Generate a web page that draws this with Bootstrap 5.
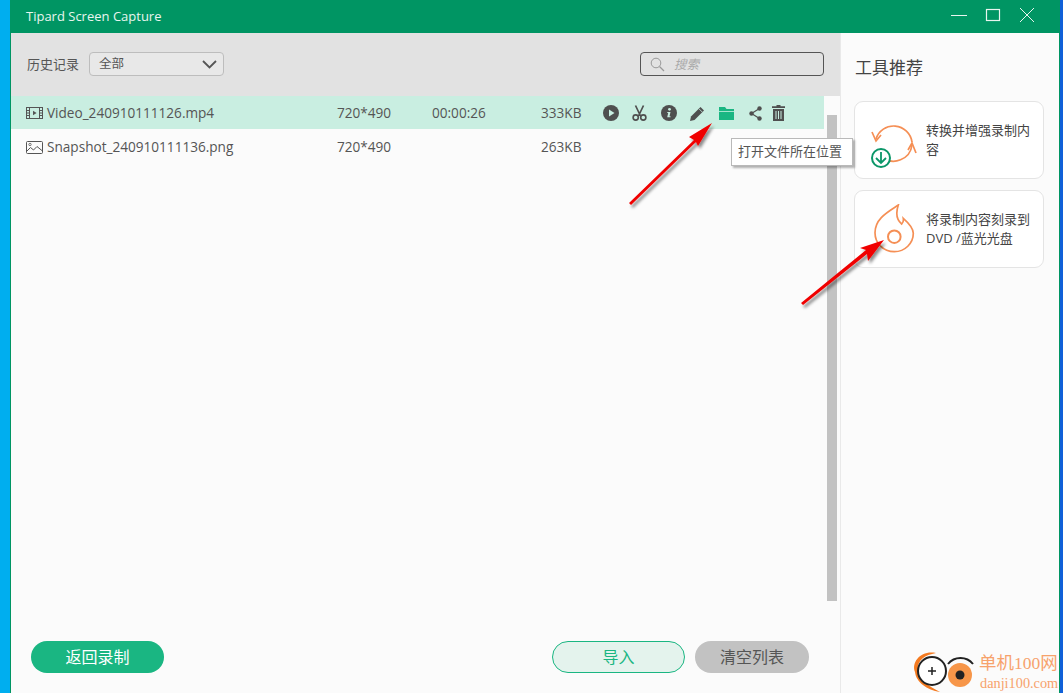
<!DOCTYPE html>
<html lang="zh-CN">

<head>
    <meta charset="UTF-8">
    <title>Tipard Screen Capture</title>
    <link href="https://cdn.jsdelivr.net/npm/bootstrap@5.3.3/dist/css/bootstrap.min.css" rel="stylesheet">
    <style>
        html, body {
            height: 100%;
            overflow: hidden;
        }

        body {
            background: linear-gradient(to right, #00aeef 1060px, #1060d8 1060px);
            font-family: "Open Sans", "Noto Sans CJK SC", sans-serif;
            font-size: 13.6px;
            color: #555;
        }

        .app-window {
            position: relative;
            width: 1050px;
            height: 693px;
            margin-left: 10px;
            background-color: #fbfbfb;
            border-left: 1px solid #009563;
            border-right: 1px solid #009563;
        }

        .title-bar {
            height: 33px;
            background-color: #009563;
            color: #e8f5ef;
            padding-left: 15px;
            font-size: 13px;
        }

        .win-btns {
            gap: 18px;
            padding: 0 24px 3px 0;
        }

        .main-area {
            height: 660px;
        }

        .left-pane {
            width: 829px;
        }

        .top-bar {
            height: 63px;
            background-color: #e2e2e2;
            padding: 0 16px 1px 16px;
        }

        .history-label {
            font-size: 13px;
            margin-right: 10px;
            padding-top: 2px;
        }

        .filter-box {
            width: 135px;
            height: 24px;
            background-color: #e8e8e8;
            border: 1px solid #bdbdbd;
            border-radius: 4px;
            padding: 1px 6px 0 9px;
            font-size: 12.5px;
        }

        .search-box {
            width: 184px;
            height: 24px;
            border: 1px solid #555;
            border-radius: 4px;
            padding-left: 9px;
            gap: 9px;
            color: #aaa;
            font-style: italic;
            font-size: 12.5px;
        }

        .search-box span {
            padding-top: 2px;
        }

        .list-wrap {
            flex: 1;
            min-height: 0;
        }

        .file-list {
            width: 813px;
        }

        .file-row {
            height: 33px;
            padding-left: 15px;
        }

        .file-row + .file-row {
            margin-top: 2px;
        }

        .file-row.is-active {
            background-color: #c9eee1;
            padding-top: 1px;
        }

        .cell-name {
            width: 294px;
            padding-left: 4px;
        }

        .cell-res {
            width: 95px;
        }

        .cell-time {
            width: 109px;
        }

        .cell-size {
            width: 55px;
        }

        .row-actions {
            display: flex;
            align-items: center;
        }

        .act {
            display: flex;
            justify-content: center;
            width: 29px;
        }

        .act-tight {
            margin-left: -6px;
        }

        .scroll-track {
            width: 15px;
            padding: 19px 0 0 3px;
        }

        .scroll-thumb {
            width: 10px;
            height: 486px;
            background-color: #c2c2c2;
        }

        .bottom-bar {
            height: 88px;
            padding: 36px 31px 0 20px;
        }

        .pill {
            height: 32px;
            border-radius: 16px;
            font-size: 16px;
            line-height: 30px;
            padding: 0;
            border: 0;
        }

        .pill-back {
            width: 133px;
            background-color: #1ab682;
            color: #fff;
        }

        .pill-import {
            width: 133px;
            background-color: #e4f3ed;
            border: 1px solid #1ab682;
            color: #1ab682;
            margin-right: 10px;
        }

        .pill-clear {
            width: 114px;
            background-color: #c2c2c2;
            color: #555;
        }

        .side-pane {
            flex: 1;
            padding: 23px 15px 0 13px;
            border-left: 1px solid #e9e9e9;
        }

        .side-title {
            font-size: 17px;
            color: #444;
            line-height: 24px;
            margin-bottom: 21px;
            padding-left: 1px;
        }

        .tool-card {
            height: 78px;
            margin-bottom: 11px;
            background-color: #fff;
            border: 1px solid #e4e4e4;
            border-radius: 9px;
            font-size: 13px;
            line-height: 19px;
            color: #444;
        }

        .tool-icon {
            width: 71px;
            flex-shrink: 0;
        }

        .tool-text {
            padding-right: 8px;
        }

        .hint-box {
            position: absolute;
            left: 720px;
            top: 138px;
            width: 122px;
            height: 28px;
            background-color: #fff;
            border: 1px solid #b9b9b9;
            box-shadow: 2px 2px 2px rgba(0, 0, 0, .3);
            font-size: 13px;
            line-height: 25px;
            padding-left: 6px;
            white-space: nowrap;
            color: #555;
        }

        .arrows {
            position: absolute;
            left: 0;
            top: 0;
            pointer-events: none;
        }

        .site-mark {
            position: absolute;
            left: 903px;
            top: 650px;
            width: 157px;
            height: 43px;
        }

        .site-name {
            position: absolute;
            left: 76px;
            top: 3px;
            font-family: "Liberation Serif", "Noto Sans CJK SC", serif;
            font-size: 17.5px;
            line-height: 20px;
            color: #f7a26c;
            white-space: nowrap;
        }

        .site-url {
            position: absolute;
            left: 77px;
            top: 24px;
            font-family: "Liberation Serif", serif;
            font-size: 14.3px;
            line-height: 18px;
            color: #f7a26c;
            white-space: nowrap;
        }
    </style>
</head>

<body>
    <div class="app-window">
        <div class="title-bar d-flex align-items-center justify-content-between">
            <span>Tipard Screen Capture</span>
            <div class="win-btns d-flex align-items-center">
                <svg width="16" height="16" viewBox="0 0 16 16"><path d="M0 8.5h16" stroke="#e8f5ef" fill="none"/></svg>
                <svg width="16" height="16" viewBox="0 0 16 16"><rect x="1.5" y="2.5" width="13" height="11" stroke="#e8f5ef" stroke-width="1.2" fill="none"/></svg>
                <svg width="16" height="16" viewBox="0 0 16 16"><path d="M1 1l14 14M15 1L1 15" stroke="#e8f5ef" fill="none"/></svg>
            </div>
        </div>

        <div class="main-area d-flex">
            <div class="left-pane d-flex flex-column">
                <div class="top-bar d-flex align-items-center justify-content-between">
                    <div class="d-flex align-items-center">
                        <span class="history-label">历史记录</span>
                        <div class="filter-box d-flex align-items-center justify-content-between">
                            <span>全部</span>
                            <svg width="15" height="9" viewBox="0 0 15 9"><path d="M1 1l6.5 6.5L14 1" stroke="#555" stroke-width="1.8" fill="none"/></svg>
                        </div>
                    </div>
                    <div class="search-box d-flex align-items-center">
                        <svg width="15" height="15" viewBox="0 0 15 15"><circle cx="6" cy="6" r="4.8" stroke="#999" fill="none"/><path d="M9.5 9.5l4.5 4.5" stroke="#999" stroke-width="1.2"/></svg>
                        <span>搜索</span>
                    </div>
                </div>

                <div class="list-wrap d-flex">
                    <div class="file-list">
                        <div class="file-row is-active d-flex align-items-center">
                            <svg width="17" height="14" viewBox="0 0 17 14"><rect x=".5" y="1.5" width="16" height="11" fill="none" stroke="#555"/><path d="M3.5 1.5v11M13.5 1.5v11M.5 4.5h3M.5 7h3M.5 9.5h3M13.5 4.5h3M13.5 7h3M13.5 9.5h3" stroke="#555" fill="none"/><path d="M7 4.8l3.6 2.2L7 9.2z" fill="#555"/></svg>
                            <span class="cell-name">Video_240910111126.mp4</span>
                            <span class="cell-res">720*490</span>
                            <span class="cell-time">00:00:26</span>
                            <span class="cell-size">333KB</span>
                            <div class="row-actions">
                                <span class="act"><svg width="16" height="16" viewBox="0 0 16 16"><circle cx="8" cy="8" r="8" fill="#4f4f4f"/><path d="M6 4.5L11.5 8 6 11.5z" fill="#c9eee1"/></svg></span>
                                <span class="act"><svg width="15" height="16" viewBox="0 0 15 16"><path d="M3.5.5l5 10.500M11.500.5l-5 10.500" stroke="#4f4f4f" stroke-width="1.7" fill="none"/><circle cx="3.700" cy="12.500" r="2.600" stroke="#4f4f4f" stroke-width="1.600" fill="none"/><circle cx="11.300" cy="12.500" r="2.600" stroke="#4f4f4f" stroke-width="1.600" fill="none"/></svg></span>
                                <span class="act"><svg width="16" height="16" viewBox="0 0 16 16"><circle cx="8" cy="8" r="8" fill="#4f4f4f"/><circle cx="8.500" cy="4.300" r="1.400" fill="#c9eee1"/><path d="M6.300 7h3.200l-1 4.300h1v1H6.200l1-4.300h-.9z" fill="#c9eee1"/></svg></span>
                                <span class="act"><svg width="15" height="15" viewBox="0 0 15 15"><path d="M0 15l1-4.500L10.500 1l3.500 3.500L4.500 14z" fill="#4f4f4f"/><path d="M9 2.800l3.300 3.300" stroke="#c9eee1" stroke-width=".8"/></svg></span>
                                <span class="act"><svg width="15" height="13" viewBox="0 0 15 13"><path d="M0 0h6l1.500 2H15v2H0z" fill="#1ab682"/><path d="M0 4.800h15V13H0z" fill="#1ab682"/></svg></span>
                                <span class="act"><svg width="13" height="15" viewBox="0 0 13 15"><path d="M10.500 2.500L2.500 7.500l8 5" stroke="#4f4f4f" stroke-width="1.200" fill="none"/><circle cx="10.500" cy="2.500" r="2.200" fill="#4f4f4f"/><circle cx="2.500" cy="7.500" r="2.200" fill="#4f4f4f"/><circle cx="10.500" cy="12.500" r="2.200" fill="#4f4f4f"/></svg></span>
                                <span class="act act-tight"><svg width="13" height="16" viewBox="0 0 13 16"><path d="M4.500 0h4v1.300H13v1.700H0V1.300h4.500z" fill="#4f4f4f"/><path d="M1 4h11v12H1zM3.500 6v8h1V6zM6 6v8h1V6zM8.500 6v8h1V6z" fill="#4f4f4f" fill-rule="evenodd"/></svg></span>
                            </div>
                        </div>
                        <div class="file-row d-flex align-items-center">
                            <svg width="17" height="14" viewBox="0 0 17 14"><rect x=".5" y=".5" width="16" height="12" rx="1" fill="none" stroke="#555"/><circle cx="4" cy="3.500" r="1.200" fill="none" stroke="#555" stroke-width=".8"/><path d="M1 10l3.500-3.500 3 2.500L11 5.500l5.500 4.500" fill="none" stroke="#555"/></svg>
                            <span class="cell-name">Snapshot_240910111136.png</span>
                            <span class="cell-res">720*490</span>
                            <span class="cell-time"></span>
                            <span class="cell-size">263KB</span>
                        </div>
                    </div>
                    <div class="scroll-track">
                        <div class="scroll-thumb"></div>
                    </div>
                </div>

                <div class="bottom-bar d-flex justify-content-between">
                    <button class="btn pill pill-back">返回录制</button>
                    <div class="d-flex">
                        <button class="btn pill pill-import">导入</button>
                        <button class="btn pill pill-clear">清空列表</button>
                    </div>
                </div>
            </div>

            <div class="side-pane">
                <div class="side-title">工具推荐</div>
                <div class="tool-card d-flex align-items-center">
                    <div class="tool-icon d-flex justify-content-center">
                        <svg width="57" height="56" viewBox="0 0 57 56">
                            <path d="M14 27A18.500 18.500 0 0 1 50 30" stroke="#f58f55" stroke-width="1.700" fill="none"/>
                            <path d="M10 20l4 9 5-6" stroke="#f58f55" stroke-width="1.700" fill="none"/>
                            <path d="M50 33A18.500 18.500 0 0 1 20 45" stroke="#f58f55" stroke-width="1.700" fill="none"/>
                            <path d="M46 38l4-7 4 10" stroke="#f58f55" stroke-width="1.700" fill="none"/>
                            <circle cx="19" cy="46" r="9" fill="#fff" stroke="#0b9668" stroke-width="2"/>
                            <path d="M19 40v11M14 46l5 5 5-5" stroke="#0b9668" stroke-width="1.800" fill="none"/>
                        </svg>
                    </div>
                    <div class="tool-text">转换并增强录制内容</div>
                </div>
                <div class="tool-card d-flex align-items-center">
                    <div class="tool-icon d-flex justify-content-center">
                        <svg width="57" height="50" viewBox="0 0 57 50">
                            <path d="M36.300 1C26.300 7.700 13 14.300 13 28.700 13 39.300 21.300 47.700 32.300 47.700 43 47.700 51.300 39.300 51.300 29.300 51.300 24.300 46.300 18.700 41.300 14.300 41.700 16.700 41 18.700 39.700 20 35.700 16.700 33 11 36.300 1z" stroke="#f58f55" stroke-width="1.700" fill="none"/>
                            <circle cx="32.300" cy="32.700" r="6.300" stroke="#f58f55" stroke-width="2" fill="none"/>
                        </svg>
                    </div>
                    <div class="tool-text">将录制内容刻录到 DVD /蓝光光盘</div>
                </div>
            </div>
        </div>

        <div class="hint-box">打开文件所在位置</div>
    </div>

    <svg class="arrows" width="1063" height="693" viewBox="0 0 1063 693">
        <defs>
            <filter id="arrowShade" x="-20%" y="-20%" width="150%" height="150%">
                <feDropShadow dx="2" dy="3" stdDeviation="1.500" flood-color="#000" flood-opacity=".45"/>
            </filter>
        </defs>
        <g filter="url(#arrowShade)" fill="#f00000">
            <path d="M629 203L694 140 689 137 712 123 698 146 696 142 631 205z"/>
            <path d="M801 303L866 250 860 248 884 240 868 261 867 254 803 305z"/>
        </g>
    </svg>

    <div class="site-mark">
        <svg width="72" height="43" viewBox="0 0 72 43">
            <path d="M33 3C18 0 8 12 12 22 13 32 24 40 37 42 26 36 15 30 15 20 14 10 22 5 33 3z" fill="#f47a20"/>
            <circle cx="29" cy="21" r="14" fill="#fff" stroke="#222" stroke-width="2"/>
            <path d="M25 21h8M29 17v8" stroke="#222" stroke-width="1.500"/>
            <circle cx="57" cy="25" r="12" fill="#f79649"/>
            <path d="M45 14A16 16 0 0 1 70 14" stroke="#222" stroke-width="2" fill="none"/>
            <circle cx="57" cy="25" r="4.500" fill="#222"/>
        </svg>
        <span class="site-name">单机100网</span>
        <span class="site-url">danji100.com</span>
    </div>
</body>

</html>
